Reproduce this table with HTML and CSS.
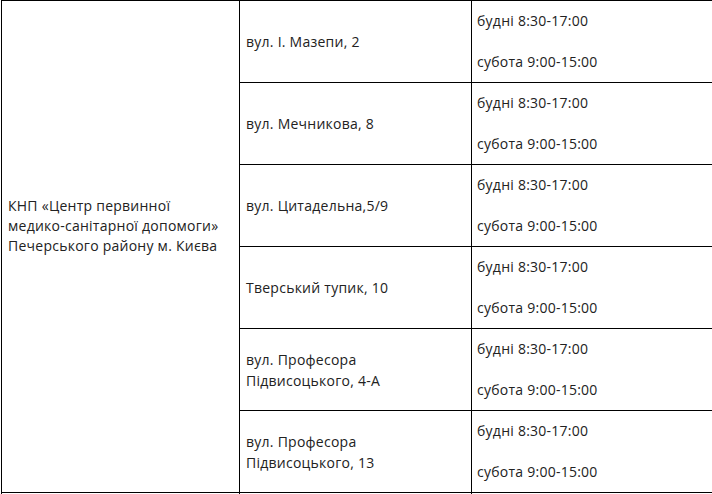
FILE: index.html
```html
<!DOCTYPE html>
<html lang="uk">
<head>
<meta charset="utf-8">
<link rel="stylesheet" href="styles.css">
</head>
<body>
<div class="frame">
<table class="schedule">
<colgroup><col class="c-org"><col class="c-addr"><col class="c-time"></colgroup>
<tbody>
<tr>
<td class="org" rowspan="6">КНП «Центр первинної<br>медико-санітарної допомоги»<br>Печерського району м. Києва</td>
<td class="addr">вул. І. Мазепи, 2</td>
<td class="time"><p>будні 8:30-17:00</p><p>субота 9:00-15:00</p></td>
</tr>
<tr>
<td class="addr">вул. Мечникова, 8</td>
<td class="time"><p>будні 8:30-17:00</p><p>субота 9:00-15:00</p></td>
</tr>
<tr>
<td class="addr">вул. Цитадельна,5/9</td>
<td class="time"><p>будні 8:30-17:00</p><p>субота 9:00-15:00</p></td>
</tr>
<tr>
<td class="addr">Тверський тупик, 10</td>
<td class="time"><p>будні 8:30-17:00</p><p>субота 9:00-15:00</p></td>
</tr>
<tr>
<td class="addr">вул. Професора<br>Підвисоцького, 4-А</td>
<td class="time"><p>будні 8:30-17:00</p><p>субота 9:00-15:00</p></td>
</tr>
<tr>
<td class="addr">вул. Професора<br>Підвисоцького, 13</td>
<td class="time"><p>будні 8:30-17:00</p><p>субота 9:00-15:00</p></td>
</tr>
<tr class="next">
<td class="org"></td>
<td class="addr"></td>
<td class="time"></td>
</tr>
</tbody>
</table>
</div>
</body>
</html>
```
FILE: styles.css
```css
html, body {
  margin: 0;
  padding: 0;
  background: #fff;
}
body {
  font-family: "Open Sans", "Liberation Sans", sans-serif;
  font-size: 14px;
  letter-spacing: 0.25px;
  color: #222;
}
.frame {
  width: 712px;
  height: 494px;
  overflow: hidden;
  padding-left: 1px;
  box-sizing: border-box;
}
.schedule {
  border-collapse: collapse;
  table-layout: fixed;
  width: 760px;
}
.c-org { width: 238px; }
.c-addr { width: 232px; }
.c-time { width: 290px; }
.schedule td {
  border: 1px solid #000;
  padding: 0 5px;
  vertical-align: middle;
}
.org {
  line-height: 20px;
  padding: 0 6px 42px !important;
}
.addr {
  line-height: 21px;
  padding-left: 6px !important;
}
.time {
  padding: 9px 5px 10px !important;
}
.time p {
  margin: 0;
  line-height: 21px;
}
.time p + p {
  margin-top: 20px;
}
.next td {
  height: 40px;
}
```
